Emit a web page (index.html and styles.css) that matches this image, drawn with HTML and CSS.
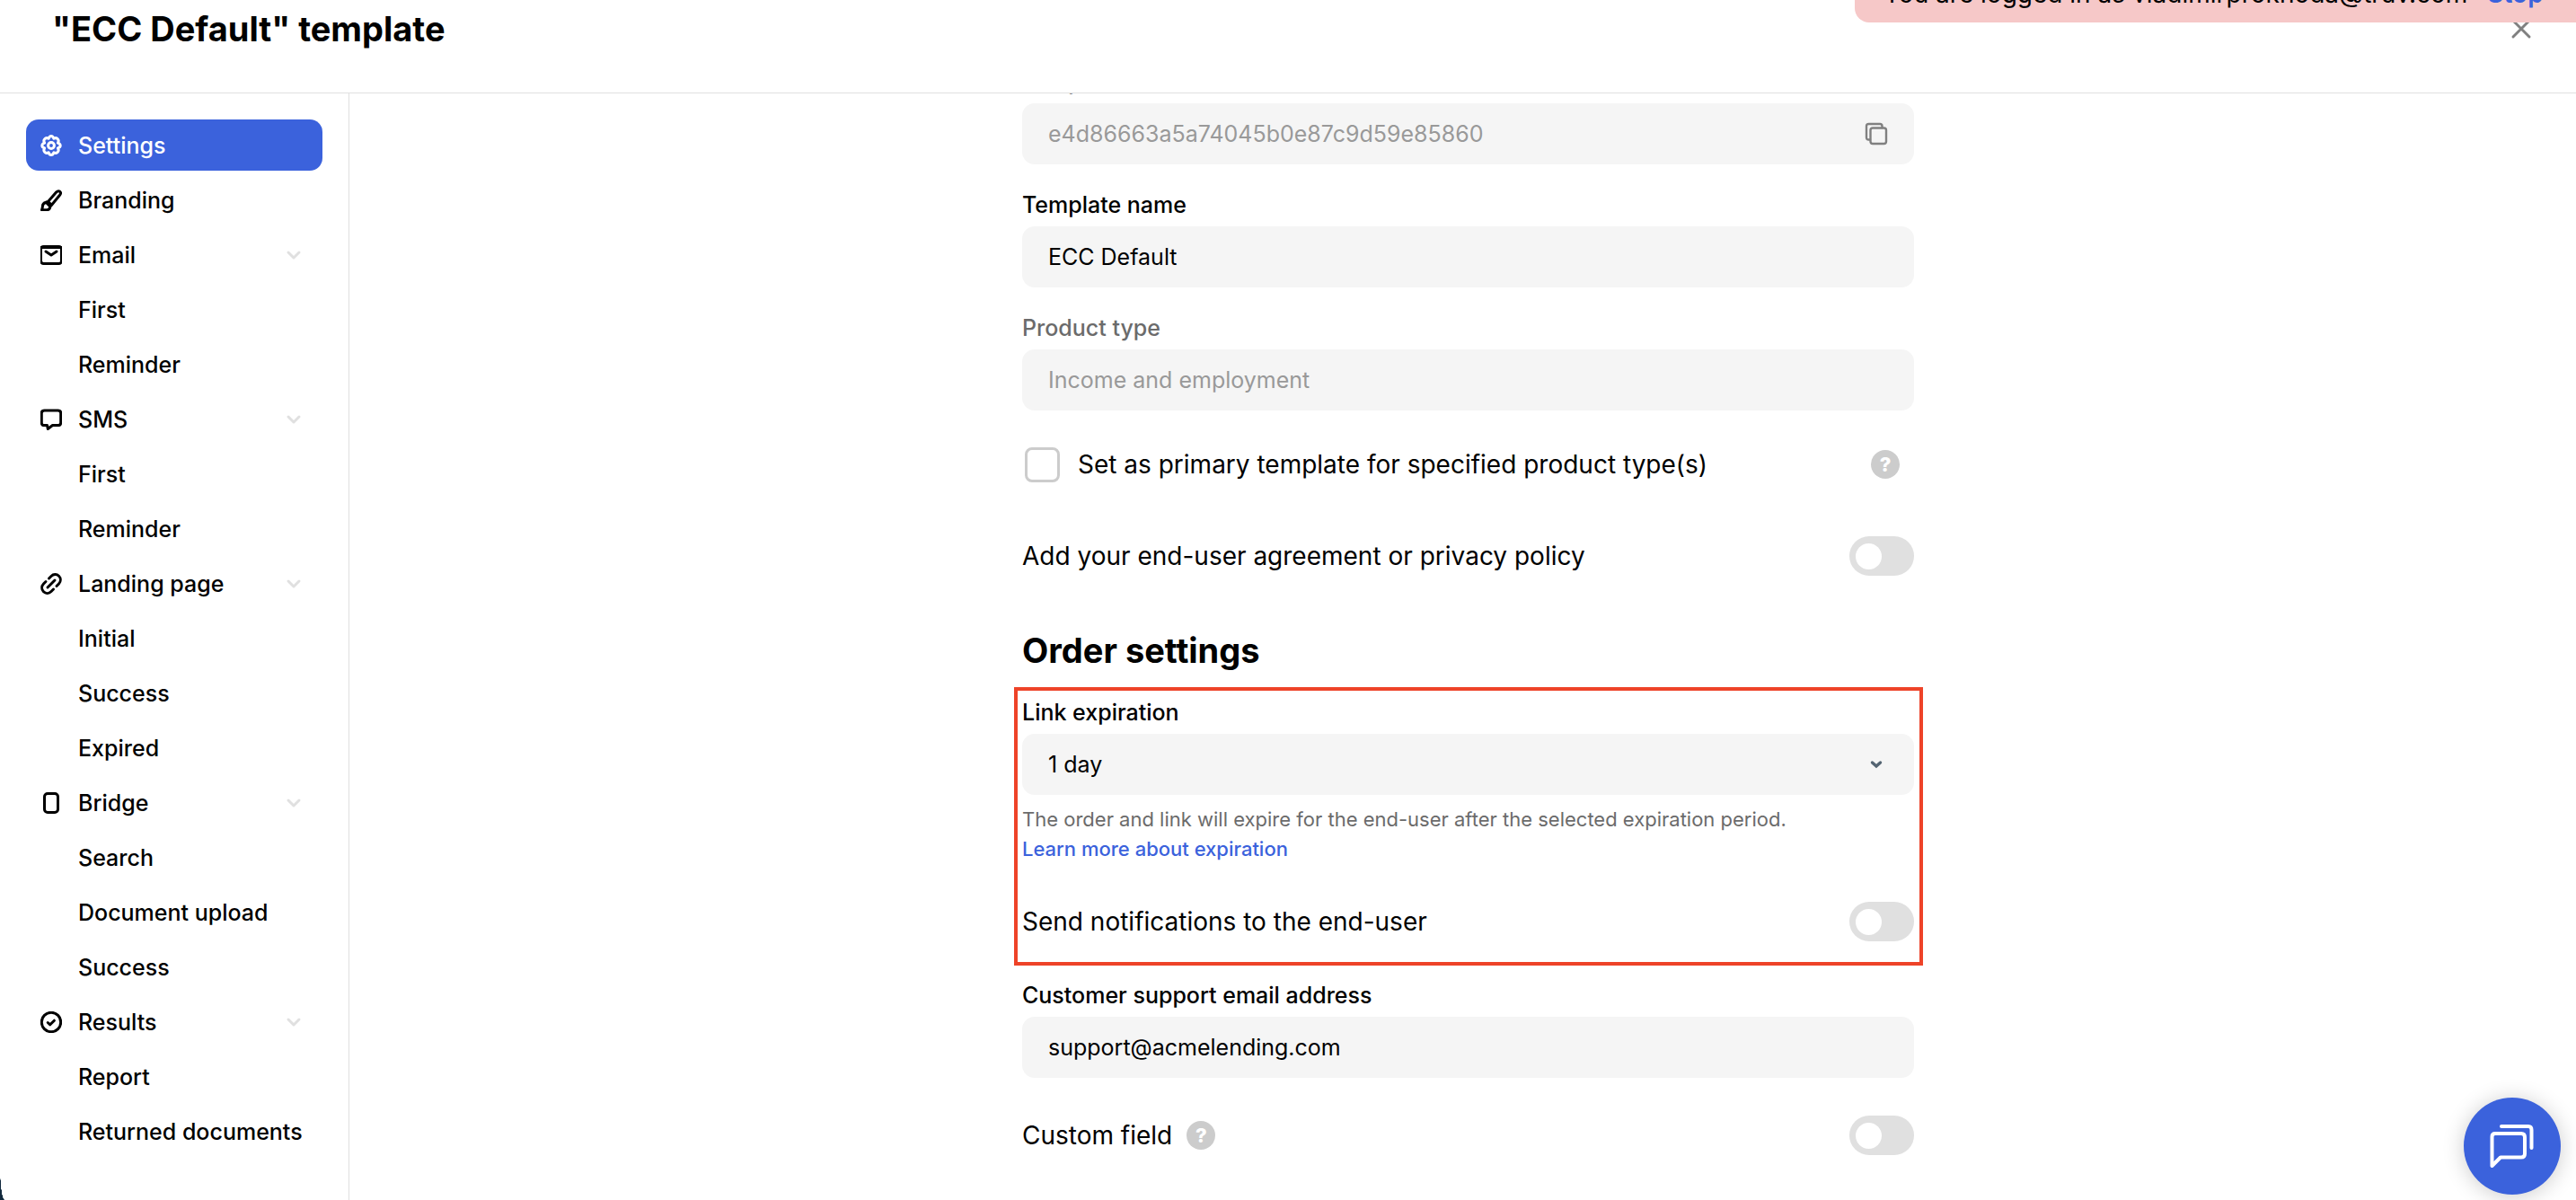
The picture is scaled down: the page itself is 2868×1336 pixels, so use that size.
FILE: index.html
```html
<!DOCTYPE html>
<html lang="en">
<head>
<meta charset="utf-8">
<title>"ECC Default" template</title>
<link rel="stylesheet" href="styles.css">
</head>
<body>
<svg class="sprite" aria-hidden="true">
  <symbol id="chevron" viewBox="0 0 24 24"><path d="M6 9l6 6 6-6"/></symbol>
</svg>
<div class="app">
  <header class="header">
    <h1 class="title">"ECC Default" template</h1>
    <button class="close" type="button" aria-label="Close"><svg class="icon" viewBox="0 0 24 24"><path d="M3 3l18 18M21 3L3 21"/></svg></button>
  </header>

  <div class="body">
    <nav class="sidebar" aria-label="Template sections">
      <ul class="group">
        <li><a class="item active" href="#settings"><svg class="icon" viewBox="0 0 24 24"><circle cx="12" cy="12" r="3.4"/><path d="M12 1.500Q14 1.500 14.900 4.300Q17.600 2.800 19.300 4.700Q21 6.500 19.400 9.100Q22.200 10 22.200 12Q22.200 14 19.400 14.900Q21 17.500 19.300 19.300Q17.600 21.200 14.900 19.700Q14 22.500 12 22.500Q10 22.500 9.100 19.700Q6.400 21.200 4.700 19.300Q3 17.500 4.600 14.900Q1.800 14 1.800 12Q1.800 10 4.600 9.100Q3 6.500 4.700 4.700Q6.400 2.800 9.100 4.300Q10 1.500 12 1.500Z"/></svg><span>Settings</span></a></li>
      </ul>
      <ul class="group">
        <li><a class="item" href="#branding"><svg class="icon" viewBox="0 0 24 24"><path d="M8.500 13.500L17.800 2.800Q19.800 0.900 21.700 2.300Q23.400 3.800 21.700 6L12.500 17.200M8.500 13.500L12.500 17.200M8.500 13.500L6.200 14.200Q2.200 15.200 2.400 19.200Q2.200 21 1.500 22.700H7.500Q10.500 22.300 10.900 19L12.500 17.200M6.200 14.200L10.900 19"/></svg><span>Branding</span></a></li>
      </ul>
      <ul class="group">
        <li><a class="item" href="#email"><svg class="icon" viewBox="0 0 24 24"><rect x="0.500" y="2.500" width="23" height="19" rx="3"/><path d="M0.500 3.500H23.500M6 8l6 4 6-4"/></svg><span>Email</span><svg class="chevron"><use href="#chevron"/></svg></a></li>
        <li><a class="item" href="#email-first"><span>First</span></a></li>
        <li><a class="item" href="#email-reminder"><span>Reminder</span></a></li>
      </ul>
      <ul class="group">
        <li><a class="item" href="#sms"><svg class="icon" viewBox="0 0 24 24"><path d="M4.500 2H19.500Q22.700 2 22.700 5V15.500Q22.700 18.500 19.500 18.500H13.500L8.300 22.500L7.500 18.500H4.500Q1.300 18.500 1.300 15.500V5Q1.300 2 4.500 2Z"/></svg><span>SMS</span><svg class="chevron"><use href="#chevron"/></svg></a></li>
        <li><a class="item" href="#sms-first"><span>First</span></a></li>
        <li><a class="item" href="#sms-reminder"><span>Reminder</span></a></li>
      </ul>
      <ul class="group">
        <li><a class="item" href="#landing"><svg class="icon" viewBox="0 0 24 24"><path d="M8 16L16 8M9.500 6L12 3.500C14.500 1 18.200 1 20.500 3.300C22.900 5.700 22.900 9.500 20.500 12L18 14.500M14.500 18L12 20.500C9.500 23 5.800 23 3.500 20.700C1.100 18.300 1.100 14.500 3.500 12L6 9.500"/></svg><span>Landing page</span><svg class="chevron"><use href="#chevron"/></svg></a></li>
        <li><a class="item" href="#landing-initial"><span>Initial</span></a></li>
        <li><a class="item" href="#landing-success"><span>Success</span></a></li>
        <li><a class="item" href="#landing-expired"><span>Expired</span></a></li>
      </ul>
      <ul class="group">
        <li><a class="item" href="#bridge"><svg class="icon" viewBox="0 0 24 24"><rect x="4.500" y="1.500" width="15" height="21" rx="3.500"/></svg><span>Bridge</span><svg class="chevron"><use href="#chevron"/></svg></a></li>
        <li><a class="item" href="#bridge-search"><span>Search</span></a></li>
        <li><a class="item" href="#bridge-upload"><span>Document upload</span></a></li>
        <li><a class="item" href="#bridge-success"><span>Success</span></a></li>
      </ul>
      <ul class="group">
        <li><a class="item" href="#results"><svg class="icon" viewBox="0 0 24 24"><circle cx="12" cy="12" r="10.700"/><path d="M8.200 12.500l2.600 2.300 4.600-4.600"/></svg><span>Results</span><svg class="chevron"><use href="#chevron"/></svg></a></li>
        <li><a class="item" href="#results-report"><span>Report</span></a></li>
        <li><a class="item" href="#results-returned"><span>Returned documents</span></a></li>
      </ul>
    </nav>

    <main class="main">
      <form class="form">
        <div class="field">
          <label class="label muted" for="template-id">Template ID</label>
          <div class="control">
            <input class="input" id="template-id" type="text" value="e4d86663a5a74045b0e87c9d59e85860" disabled>
            <button class="copy" type="button" aria-label="Copy template ID"><svg class="icon" viewBox="0 0 24 24"><path d="M5 18.500H3.500Q1 18.500 1 16V3.500Q1 1 3.500 1H16Q18.500 1 18.500 3.500V5"/><rect x="5.500" y="5.500" width="17.500" height="17.500" rx="2.500"/></svg></button>
          </div>
        </div>
        <div class="field">
          <label class="label" for="template-name">Template name</label>
          <input class="input" id="template-name" type="text" value="ECC Default">
        </div>
        <div class="field">
          <label class="label muted" for="product-type">Product type</label>
          <input class="input" id="product-type" type="text" value="Income and employment" disabled>
        </div>
        <div class="row primary">
          <input class="checkbox" id="primary" type="checkbox">
          <label for="primary">Set as primary template for specified product type(s)</label>
          <button class="help end" type="button" aria-label="About primary templates">?</button>
        </div>
        <div class="row policy">
          <label for="policy">Add your end-user agreement or privacy policy</label>
          <input class="toggle end" id="policy" type="checkbox" role="switch">
        </div>
        <h2 class="section">Order settings</h2>
        <div class="highlight">
          <label class="label" for="expiration">Link expiration</label>
          <div class="control">
            <select class="input" id="expiration"><option>1 day</option></select>
            <svg class="caret" viewBox="0 0 24 24"><path d="M7.500 10l4.500 4 4.500-4"/></svg>
          </div>
          <p class="hint">The order and link will expire for the end-user after the selected expiration period.<br><a href="#expiration-help">Learn more about expiration</a></p>
          <div class="row">
            <label for="notify">Send notifications to the end-user</label>
            <input class="toggle end" id="notify" type="checkbox" role="switch">
          </div>
        </div>
        <div class="field">
          <label class="label" for="support">Customer support email address</label>
          <input class="input" id="support" type="email" value="support@acmelending.com">
        </div>
        <div class="row custom">
          <label for="custom">Custom field</label>
          <button class="help" type="button" aria-label="About custom fields">?</button>
          <input class="toggle end" id="custom" type="checkbox" role="switch">
        </div>
      </form>
    </main>
  </div>
</div>

<div class="banner"><span>You are logged in as vladimirprokhoda@truv.com</span><a href="#stop">Stop</a></div>
<button class="chat" type="button" aria-label="Open chat"><svg viewBox="0 0 50 50"><path d="M13 3H43Q46.500 3 46.500 7V27"/><path d="M6 11H35Q39 11 39 15V33.500Q39 37.500 35 37.500H12L2.500 47V14.500Q2.500 11 6 11Z"/></svg></button>
<div class="corner"></div>
</body>
</html>
```

FILE: styles.css
```css
* {
  box-sizing: border-box;
}

body {
  margin: 0;
  background: #fff;
  color: #000;
  font-family: Inter, "Liberation Sans", sans-serif;
  font-size: 28px;
  line-height: 36px;
}

button,
input,
select {
  font: inherit;
  color: inherit;
}

button {
  padding: 0;
  border: 0;
  background: none;
  cursor: pointer;
}

a {
  color: #3b62dc;
  text-decoration: none;
}

.sprite {
  display: none;
}

.icon {
  width: 24px;
  height: 24px;
  fill: none;
  stroke: currentColor;
  stroke-width: 3;
  stroke-linecap: round;
  stroke-linejoin: round;
}

.app {
  display: flex;
  flex-direction: column;
  height: 100vh;
  overflow: hidden;
}

.header {
  display: flex;
  flex: none;
  align-items: center;
  justify-content: space-between;
  padding: 8px 49px 47px 58px;
  border-bottom: 1px solid #e0e0e0;
}

.title,
.section {
  margin: 0;
  font-size: 38px;
  font-weight: 700;
  line-height: 48px;
}

.close {
  display: flex;
  color: #808080;
}

.body {
  display: flex;
  flex: 1;
  min-height: 0;
}

.sidebar {
  display: flex;
  flex: none;
  flex-direction: column;
  gap: 4px;
  width: 389px;
  padding: 29px 29px 0;
  border-right: 1px solid #e0e0e0;
  font-size: 25px;
  font-weight: 500;
}

.group {
  display: flex;
  flex-direction: column;
  gap: 4px;
  margin: 0;
  padding: 0;
  list-style: none;
}

.item {
  display: grid;
  grid-template-columns: 24px 1fr 24px;
  column-gap: 18px;
  align-items: center;
  height: 57px;
  padding: 0 20px 0 16px;
  border-radius: 14px;
  color: #000;
  white-space: nowrap;
}

.item span {
  grid-column: 2;
}

.item:not(:has(.chevron)) span {
  grid-column: 2 / 4;
}

.active {
  background: #3b62dc;
  color: #fff;
}

.chevron {
  width: 24px;
  height: 24px;
  fill: none;
  stroke: #e0e0e0;
  stroke-width: 3;
  stroke-linecap: round;
  stroke-linejoin: round;
}

.main {
  flex: 1;
  min-width: 0;
  padding: 0 0 0 12px;
  overflow: hidden;
}

.form {
  width: 100%;
  max-width: 993px;
  margin: -31px auto 0;
}

.label {
  display: block;
  padding-bottom: 6px;
  font-size: 25px;
  font-weight: 500;
}

.muted {
  color: #6b6b6b;
}

.field {
  padding-bottom: 27px;
}

.control {
  display: grid;
  align-items: center;
}

.control > * {
  grid-area: 1 / 1;
}

.input {
  display: block;
  width: 100%;
  height: 68px;
  padding: 0 29px;
  border: 0;
  border-radius: 14px;
  background: #f5f5f5;
  font-size: 25px;
  appearance: none;
}

.input:disabled {
  color: #999;
}

.copy,
.caret {
  justify-self: end;
  margin-right: 30px;
}

.copy {
  display: flex;
  color: #808080;
}

.copy .icon {
  stroke-width: 2.4;
  overflow: visible;
}

.caret {
  width: 24px;
  height: 24px;
  fill: none;
  stroke: #546472;
  stroke-width: 3.4;
  stroke-linecap: round;
  pointer-events: none;
}

.row {
  display: flex;
  align-items: center;
  height: 44px;
}

.end {
  margin-left: auto;
}

.primary {
  padding: 0 16px 0 3px;
  margin-top: 11px;
  gap: 20px;
}

.policy {
  margin-top: 58px;
}

.custom {
  gap: 16px;
  margin-top: 15px;
}

.checkbox,
.toggle {
  margin-top: 0;
  margin-bottom: 0;
  margin-right: 0;
  appearance: none;
}

.checkbox {
  width: 39px;
  height: 39px;
  margin-left: 0;
  border: 3px solid #ccc;
  border-radius: 8px;
}

.toggle {
  display: flex;
  align-items: center;
  width: 72px;
  height: 44px;
  padding: 0 7px;
  border-radius: 22px;
  background: #e0e0e0;
}

.toggle::before {
  width: 29px;
  height: 29px;
  border-radius: 50%;
  background: #fff;
  content: "";
}

.help {
  width: 32px;
  height: 32px;
  border-radius: 50%;
  background: #ccc;
  color: #fff;
  font-size: 22px;
  font-weight: 800;
  line-height: 32px;
}

.section {
  margin-top: 59px;
}

.highlight {
  margin: 17px -10px 15px -9px;
  padding: 6px 6px 23px 5px;
  border: 4px solid #ee4328;
}

.hint {
  margin: 11px 0 42px;
  color: #6b6b6b;
  font-size: 22px;
  line-height: 33px;
}

.hint a {
  font-weight: 500;
}

.banner {
  position: absolute;
  top: -33px;
  right: 0;
  display: flex;
  gap: 22px;
  width: 803px;
  padding: 8px 32px 14px;
  border-radius: 0 0 0 16px;
  background: #f6c8c8;
}

.banner a {
  font-weight: 600;
}

.chat {
  position: fixed;
  right: 17px;
  bottom: 6px;
  display: flex;
  align-items: center;
  justify-content: center;
  width: 108px;
  height: 108px;
  border-radius: 50%;
  background: #3b62dc;
  box-shadow: 0 2px 24px rgba(0, 0, 0, 0.2);
}

.chat svg {
  width: 50px;
  height: 50px;
  fill: none;
  stroke: #fff;
  stroke-width: 4;
  stroke-linecap: round;
  stroke-linejoin: round;
}

.corner {
  position: fixed;
  bottom: 0;
  left: 0;
  width: 5px;
  height: 38px;
  background: radial-gradient(ellipse 5px 38px at 100% 0, transparent 97%, #122a3e);
}
```
